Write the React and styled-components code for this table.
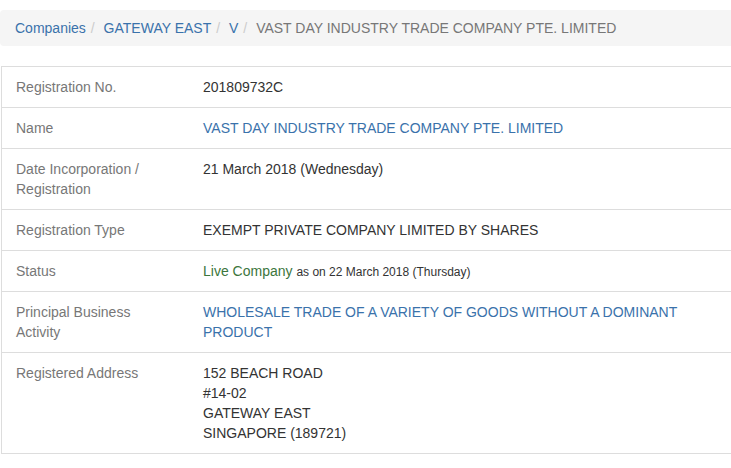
import React from "react";
import styled, { createGlobalStyle } from "styled-components";

const GlobalStyle = createGlobalStyle`
  html, body {
    margin: 0;
    padding: 0;
    background: #fff;
    overflow: hidden;
  }
  body {
    font-family: "Liberation Sans", Arial, sans-serif;
    font-size: 14px;
    line-height: 20px;
    color: #333;
  }
`;

const Page = styled.div`
  width: 770px;
  padding-top: 10px;
`;

const Breadcrumb = styled.ol`
  list-style: none;
  margin: 0 0 20px;
  padding: 8px 15px;
  background: #f5f5f5;
  border-radius: 4px;
  display: flex;
`;

const Crumb = styled.li`
  color: ${(p) => (p.$active ? "#777" : "#3a72ab")};

  &:not(:first-child)::before {
    content: "/\\00a0";
    padding: 0 5px;
    color: #ccc;
  }
`;

const Table = styled.div`
  border: 1px solid #ddd;
  margin-left: 1px;
`;

const Row = styled.div`
  display: grid;
  grid-template-columns: 186px 1fr;
  border-top: 1px solid #ddd;

  &:first-child {
    border-top: none;
  }
`;

const Label = styled.div`
  padding: 10px 14px;
  color: #777;
`;

const Value = styled.div`
  padding: 10px 15px;
  color: ${(p) => (p.$link ? "#3a72ab" : "#333")};
`;

const Live = styled.span`
  color: #3c763d;
`;

const Small = styled.small`
  font-size: 12px;
  line-height: 1;
`;

const rows = [
  { label: "Registration No.", value: "201809732C" },
  { label: "Name", value: "VAST DAY INDUSTRY TRADE COMPANY PTE. LIMITED", link: true },
  { label: <>Date Incorporation /<br />Registration</>, value: "21 March 2018 (Wednesday)" },
  { label: "Registration Type", value: "EXEMPT PRIVATE COMPANY LIMITED BY SHARES" },
  {
    label: "Status",
    value: (
      <>
        <Live>Live Company</Live> <Small>as on 22 March 2018 (Thursday)</Small>
      </>
    ),
  },
  {
    label: <>Principal Business<br />Activity</>,
    value: <>WHOLESALE TRADE OF A VARIETY OF GOODS WITHOUT A DOMINANT<br />PRODUCT</>,
    link: true,
  },
  {
    label: "Registered Address",
    value: (
      <>
        152 BEACH ROAD<br />#14-02<br />GATEWAY EAST<br />SINGAPORE (189721)
      </>
    ),
  },
];

export default function App() {
  return (
    <Page>
      <GlobalStyle />
      <Breadcrumb>
        <Crumb>Companies</Crumb>
        <Crumb>GATEWAY EAST</Crumb>
        <Crumb>V</Crumb>
        <Crumb $active>VAST DAY INDUSTRY TRADE COMPANY PTE. LIMITED</Crumb>
      </Breadcrumb>
      <Table>
        {rows.map((r, i) => (
          <Row key={i}>
            <Label>{r.label}</Label>
            <Value $link={r.link}>{r.value}</Value>
          </Row>
        ))}
      </Table>
    </Page>
  );
}
